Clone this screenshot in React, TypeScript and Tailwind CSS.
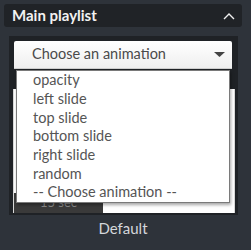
import React from "react";

const items = ["opacity", "left slide", "top slide", "bottom slide", "right slide", "random", "-- Choose animation --"];

export default function App() {
  return (
    <div
      className="w-[251px] h-[250px] bg-[#2e333a] p-[4px] flex flex-col"
      style={{ fontFamily: '"Source Sans Pro", Lato, "Noto Sans", sans-serif' }}
    >
      <div className="h-[23px] w-[238px] rounded-[3px] bg-[#202327] flex items-center justify-between pl-[8px] pr-[7px]">
        <span className="text-[15px] font-bold text-[#f2f2f2] leading-none">Main playlist</span>
        <svg width="12" height="7" viewBox="0 0 12 7" className="mt-[1px]">
          <path d="M1 6 L6 1 L11 6" fill="none" stroke="#f0f0f0" strokeWidth="1.4" />
        </svg>
      </div>
      <div className="relative ml-[5px] mt-[9px] w-[229px] bg-[#1f2226] pt-[5px] pl-[4px] pr-[3px] pb-[2px] flex flex-col">
        <div className="ml-[1px] w-[218px] h-[28px] bg-gradient-to-b from-white to-[#efefef] rounded-t-[2px] border-b border-[#cfcfcf] flex items-center justify-between pl-[18px] pr-[7px]">
          <span className="text-[14.5px] text-[#4a4a4a] leading-none">Choose an animation</span>
          <svg width="11" height="5" viewBox="0 0 11 5">
            <path d="M0 0 H11 L5.5 5 Z" fill="#444" />
          </svg>
        </div>
        <div className="mt-[20px] h-[124px] bg-white border-x border-[#d8d8d8] relative flex flex-col justify-end">
          <div className="w-[89px] h-[20px] bg-[#3a3a3a] flex items-center justify-center text-[13px] text-[#8a8a8a]">
            15 sec
          </div>
        </div>
        <div className="absolute left-[7px] top-[34px] w-[214px] h-[133px] bg-white border border-[#7a7a7a] shadow-[1px_2px_3px_rgba(0,0,0,0.35)] flex flex-col">
          {items.map((t) => (
            <div key={t} className="h-[19px] flex items-center pl-[16px] text-[14.5px] text-[#555] leading-none">
              {t}
            </div>
          ))}
        </div>
      </div>
      <div className="mt-[6px] w-[238px] text-center text-[15px] text-[#d4d7db] leading-none">Default</div>
    </div>
  );
}
